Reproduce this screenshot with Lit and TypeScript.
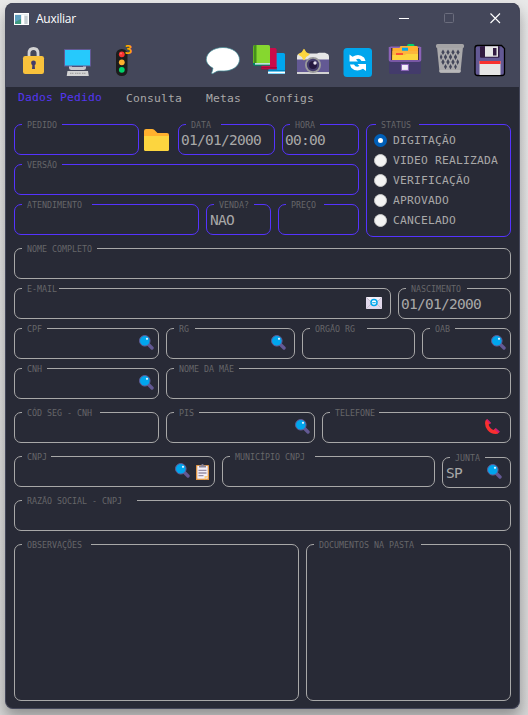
import { LitElement, html, svg, css, nothing, type TemplateResult } from "lit";
import { customElement, property } from "lit/decorators.js";

type Glyph = "search" | "mail" | "clipboard" | "phone";

const glyphs: Record<Glyph, TemplateResult> = {
  search: html`<svg width="15" height="15" viewBox="0 0 15 15">
    <path d="M9 9l4 4" stroke="#635994" stroke-width="3.4" stroke-linecap="round"/>
    <circle cx="5.8" cy="5.8" r="5.3" fill="#00a6ed" stroke="#635994" stroke-width="1"/>
    <circle cx="8" cy="3.8" r="1.1" fill="#e4f5ff"/></svg>`,
  mail: html`<svg width="16" height="12" viewBox="0 0 16 12">
    <rect width="16" height="12" fill="#e1d8ec"/><path d="M0 0l8 7 8-7z" fill="#f3eef8"/>
    <path d="M0 12l6-6M16 12l-6-6M0 0l6 6M16 0l-6 6" stroke="#b4acbc" stroke-width=".6"/>
    <circle cx="8" cy="5.6" r="3" fill="#fff" stroke="#00a6ed" stroke-width="1.5"/>
    <path d="M6.300 5.700h3.400" stroke="#00a6ed" stroke-width="1.100"/></svg>`,
  clipboard: html`<svg width="13" height="16" viewBox="0 0 13 16">
    <rect y="1" width="13" height="15" rx=".6" fill="#e19747"/><rect x="1.3" y="2" width="10.4" height="12.7" fill="#f3eef8"/>
    <path d="M3 1.6h2Q5.2 0 6.5 0T8 1.6h2v2H3z" fill="#8a8394"/>
    <path d="M2.5 6.4h8M2.5 9h8M2.5 11.7h5" stroke="#998ea4" stroke-width="1.3"/>
    <path d="M8.500 15.500v-3.500h4z" fill="#ffce7c"/></svg>`,
  phone: html`<svg width="15" height="15" viewBox="0 0 15 15">
    <path d="M.5 1.5L2 .2l3.6 3.6-2 2q1.4 4 5 5.2l1.7-1.8 4.2 3.6-1.8 2Q6 15.600 2.500 11T.5 1.500z" fill="#f92f2f"/>
    <path d="M1.300 1L2.300 0l3.900 3.900-1.200 1.200zM9.600 10.400l1.300-1.300 4 3.700-1.400 1.300z" fill="#ca1c78"/></svg>`,
};

/** Outlined box whose caption interrupts the top border. */
@customElement("caption-box")
class CaptionBox extends LitElement {
  @property() caption = "";
  @property() value = "";
  @property({ type: Number }) gap = 40;
  @property({ type: Number }) lead = 8;
  @property({ attribute: false }) icons: Glyph[] = [];

  static styles = css`
    :host { display: block; position: relative; box-sizing: border-box; flex: none;
      border: 1px solid var(--line, #a8a8a8); border-radius: 7px; color: #a8a8a8; }
    .caption { position: absolute; top: -5px; height: 9px; box-sizing: border-box; padding-left: 5px;
      background: #282a36; color: #666669; white-space: pre;
      font: 8.3px/10px "DejaVu Sans Mono", monospace; }
    .body { display: flex; align-items: center; height: 29px; padding: 0 var(--end, 4px) 0 var(--start, 2px); }
    .value { flex: 1; font: 14.5px/16px "DejaVu Sans Mono", monospace; letter-spacing: -0.73px; white-space: pre; padding-top: 1px; }
    .icons { display: flex; gap: 6px; align-items: center; padding-bottom: 2px; }
    .mail { padding-right: 4px; }
    .phone { padding-right: 6px; }
    .clipboard { padding: 2px 1px 0 0; }
    svg { display: block; fill: none; }
  `;

  render() {
    return html`<span class="caption" style="left:${this.lead - 1}px;width:${this.gap}px">${this.caption}</span>
      <slot><div class="body"><span class="value">${this.value}</span>
      ${this.icons.length ? html`<span class="icons">${this.icons.map(i => html`<span class=${i}>${glyphs[i]}</span>`)}</span>` : nothing}
      </div></slot>`;
  }
}

interface Box { w: number; c: string; g: number; v?: string; icons?: Glyph[]; kind?: string }

const orderRow: Box[] = [
  { w: 97, c: "DATA", g: 35, v: "01/01/2000" },
  { w: 77, c: "HORA", g: 30, v: "00:00" },
];
const serviceRow: Box[] = [
  { w: 185, c: "ATENDIMENTO", g: 70 },
  { w: 65, c: "VENDA?", g: 40, v: "NAO", kind: "choice" },
  { w: 81, c: "PREÇO", g: 38 },
];
const personRows: { h: number; after: number; items: Box[] }[] = [
  { h: 31, after: 9, items: [{ w: 497, c: "NOME COMPLETO", g: 75 }] },
  { h: 31, after: 9, items: [{ w: 377, c: "E-MAIL", g: 37, icons: ["mail"] }, { w: 113, c: "NASCIMENTO", g: 61, v: "01/01/2000" }] },
  { h: 31, after: 9, items: [
    { w: 145, c: "CPF", g: 25, icons: ["search"] }, { w: 129, c: "RG", g: 21, icons: ["search"], kind: "inset" },
    { w: 113, c: "ORGÃO RG", g: 57 }, { w: 89, c: "OAB", g: 25, icons: ["search"] }] },
  { h: 31, after: 13, items: [{ w: 145, c: "CNH", g: 25, icons: ["search"], kind: "raised" }, { w: 345, c: "NOME DA MÃE", g: 65 }] },
  { h: 31, after: 13, items: [
    { w: 145, c: "CÓD SEG - CNH", g: 78 }, { w: 149, c: "PIS", g: 25, icons: ["search"] },
    { w: 189, c: "TELEFONE", g: 49, icons: ["phone"] }] },
  { h: 31, after: 13, items: [
    { w: 201, c: "CNPJ", g: 29, icons: ["search", "clipboard"] }, { w: 213, c: "MUNICÍPIO CNPJ", g: 85 },
    { w: 69, c: "JUNTA", g: 35, v: "SP", icons: ["search"], kind: "choice inset drop" }] },
  { h: 31, after: 13, items: [{ w: 497, c: "RAZÃO SOCIAL - CNPJ", g: 115 }] },
  { h: 157, after: 0, items: [{ w: 285, c: "OBSERVAÇÕES", g: 69 }, { w: 205, c: "DOCUMENTOS NA PASTA", g: 107 }] },
];
const statuses = ["DIGITAÇÃO", "VIDEO REALIZADA", "VERIFICAÇÃO", "APROVADO", "CANCELADO"];

/** Toolbar slots: each drawing shares one coordinate space, cut into [left, width]. */
const tools: { x: number; w: number; art: TemplateResult }[] = [
  { x: 14, w: 40, art: svg`
    <path d="M29 57v-3.500q0-5 4.500-5t4.500 5V57" stroke="#d3d3d3" stroke-width="2.800"/>
    <rect x="23" y="56" width="21" height="18" rx="2.200" fill="#f9c23c"/>
    <circle cx="33.500" cy="63" r="2.400" fill="#433b6b"/><path d="M32.500 63h2l.5 6h-3z" fill="#433b6b"/>` },
  { x: 54, w: 50, art: svg`
    <path d="M69 65h17v3q0 2-2.500 2h-12q-2.500 0-2.500-2z" fill="#c9c7cc"/><path d="M72 65h11v2H72z" fill="#44475a"/>
    <rect x="64" y="49" width="27" height="17.500" rx=".5" fill="#635994"/><rect x="65" y="50" width="25" height="15.500" fill="#26c9fc"/>
    <path d="M67.500 71h20.500l.8 5H66.700z" fill="#d3d3d3"/><path d="M70 73.300h4M75 73.300h6M82 73.300h4" stroke="#9b9b9b" stroke-dasharray="1.300 .5"/>` },
  { x: 104, w: 40, art: svg`
    <rect x="116" y="49" width="11.500" height="27" rx="5.500" fill="#1c1c1c"/>
    <circle cx="121.800" cy="54.300" r="2.900" fill="#f8312f"/><circle cx="121.800" cy="62.300" r="2.900" fill="#ffb02e"/>
    <circle cx="121.800" cy="69.800" r="2.900" fill="#00d26a"/><circle cx="121" cy="53.500" r="1" fill="#ff6b6b"/>
    <text x="124.500" y="54" class="count">3</text>` },
  { x: 196, w: 50, art: svg`
    <path d="M223 47.500c9.500 0 16.500 5.500 16.500 12s-7 11.500-15.500 11.500c-3 0-5-.3-7 .3l-4 2.200c-1.600.7-1.600-.5-1-1.500l1-3.800c-3.800-2.200-6.700-5.200-6.700-8.700 0-6.500 7.200-12 16.700-12z" fill="#fff" stroke="#3e8993" stroke-width=".7"/>` },
  { x: 246, w: 45, art: svg`
    <path d="M270 53h13.500q1.500 0 1.500 1.500V74h-17z" fill="#00a6ed"/><path d="M268 71.500h17v2h-17z" fill="#fff"/><path d="M268 70.700h17" stroke="#006a9b" stroke-width=".7"/>
    <path d="M261 48h14q1.600 0 1.600 1.500V69h-15z" fill="#ca0b4a"/><path d="M261 67.500h16M261 69h16" stroke="#990838" stroke-width=".8"/>
    <path d="M255 45h13.500q1.500 0 1.500 1.500V65h-17V47q0-2 2-2z" fill="#86d72f"/><path d="M254.500 45h2v18h-3V46.500z" fill="#44911b"/>
    <path d="M253 63h17v2.700h-15q-2 0-2-1.500z" fill="#008463"/><path d="M255 63.900h15" stroke="#fff" stroke-width="1.100"/>` },
  { x: 291, w: 45, art: svg`
    <path d="M297 57q0-3.500 3-3.500h17l2-.7h6l2 1q2 .2 2 3.200v16H297z" fill="#e6e6e6"/>
    <path d="M297 59.500h32V72H297z" fill="#635994"/><path d="M297 72h32v2h-32z" fill="#d3d3d3"/>
    <circle cx="313" cy="65" r="8" fill="#9b9b9b"/><circle cx="313" cy="65" r="6.200" fill="#433b6b"/><circle cx="313" cy="65" r="4" fill="#25183f"/>
    <circle cx="315" cy="63" r="1.700" fill="#e6e0f0"/>
    <path d="M304 49.500l1.800 3 3.200 2-3.200 2-1.800 3.200-1.800-3.200-3.300-2 3.300-2z" fill="#fcd53f" stroke="#fcd53f" stroke-width="1.200" stroke-linejoin="round"/>` },
  { x: 336, w: 44, art: svg`
    <rect x="343.500" y="48" width="28.500" height="29" rx="3.500" fill="#00a6ed"/>
    <path d="M349.500 54.500l3 2.200q6.500-3.800 11.500.8.800 1 1.500 3.500h-4q-2-3.600-5.500-1.500l2 2h-8.500zM366 71l-3-2.200q-6.500 3.800-11.500-.8-.8-1-1.500-3.500h4q2 3.600 5.500 1.500l-2-2h8.500z" fill="#fff"/>` },
  { x: 380, w: 48, art: svg`
    <path d="M391 46.500h28.500q1.500 0 1.500 1.500v12h-32V48q0-1.500 2-1.500z" fill="#8c63b8"/><path d="M391 48h28v12h-28z" fill="#44303d"/>
    <path d="M407 46q0-2 2-2h4q1.500 0 1.500 2v2H407z" fill="#00d26a"/>
    <path d="M392.500 48h7l1-2h16q1.500 0 1.500 1.500V60h-26z" fill="#ffb02e"/><path d="M392.500 51h25.500v9h-25.500z" fill="#fcb53c"/>
    <path d="M392.500 55h12l2-1h11.500v6h-25.500z" fill="#fcd53f"/><rect x="402" y="47.700" width="6" height="3" fill="#00a6ed"/><path d="M396 54h7" stroke="#f8312f" stroke-width="1.700"/>
    <path d="M389 60h32v12q0 2-1.500 2h-29q-1.500 0-1.500-2z" fill="#433b6b"/><path d="M389.500 47v13q0 1 1.500 1h28q1.500 0 1.500-1v-13" stroke="#8c63b8" stroke-width="1.500"/>
    <rect x="401.400" y="64.400" width="7" height="6" fill="#f3eef8" stroke="#8c63b8"/>` },
  { x: 428, w: 41, art: svg`
    <path d="M437 47h26l-2.500 25q-.2 1-1.500 1h-18q-1.300 0-1.500-1z" fill="#aaa9ab"/>
    <g fill="#44475a"><path d="M443 49.500l1.700 2.700-1.700 2.700-1.700-2.700zM448 49.500l1.700 2.700-1.700 2.700-1.700-2.700zM453 49.500l1.700 2.700-1.700 2.700-1.700-2.700zM458 49.500l1.700 2.700-1.700 2.700-1.700-2.700z"/>
    <path d="M441 54l1.500 3-1.500 3-1.200-3zM445.500 54l1.700 3-1.700 3-1.700-3zM450.500 54l1.700 3-1.700 3-1.700-3zM455.500 54l1.700 3-1.700 3-1.700-3z"/>
    <path d="M443 59l1.700 3-1.700 3-1.700-3zM448 59l1.700 3-1.700 3-1.700-3zM453 59l1.700 3-1.700 3-1.700-3zM457.700 59l1.400 3-1.400 3-1.400-3z"/>
    <path d="M445.500 64l1.500 2.700-1.500 2.700-1.500-2.700zM450.500 64l1.500 2.700-1.500 2.700-1.500-2.700zM455.500 64l1.400 2.700-1.400 2.700-1.400-2.700z"/></g>
    <rect x="436" y="44" width="28" height="4" rx="1.500" fill="#a4a3a5"/><path d="M439.500 71h21" stroke="#b9b8ba" stroke-width="2"/>` },
  { x: 469, w: 42, art: svg`
    <path d="M477.500 45.500h24l3 3V73q0 2.500-2.500 2.500h-24.500q-2.500 0-2.500-2.500V48q0-2.500 2.500-2.500z" fill="#635994" stroke="#000" stroke-width="1.300"/>
    <rect x="480" y="46.200" width="19.500" height="11.500" rx="1" fill="#321b41"/><path d="M485 46.200h13v10.500h-13z" fill="#e6e6e6"/><rect x="493" y="48" width="3.500" height="7.500" fill="#321b41"/>
    <path d="M479.500 61h21v14h-21z" fill="#e6e6e6"/><path d="M479.500 61h21v3h-21z" fill="#f8312f"/>` },
];

@customElement("app-root")
class AppRoot extends LitElement {
  static styles = css`
    :host { display: block; box-sizing: border-box; width: 528px; height: 715px; padding: 3px 8px 6px 5px; overflow: hidden;
      background: linear-gradient(#e8e8e8, #dedede 60%, #d6d6d6); }
    .window { box-sizing: border-box; height: 706px; border-radius: 8px; overflow: hidden; background: #282a36;
      border: 1px solid #44475a; border-top: 0; box-shadow: 0 8px 14px rgba(0,0,0,.32); }
    .title { display: flex; align-items: center; height: 31px; padding: 0 8px; background: #44475a; color: #fff;
      font: 12px/16px "Open Sans", "Noto Sans", sans-serif; }
    .name { margin-left: 7px; flex: 1; letter-spacing: -.25px; }
    svg { display: block; fill: none; flex: none; }
    .tools { display: flex; height: 53px; padding-left: 8px; background: #44475a; }
    .spacer { width: 52px; }
    .count { font: bold 13px "DejaVu Sans Mono", monospace; fill: #ffa500; }
    .tabs { display: flex; height: 37px; box-sizing: border-box; padding: 4px 0 0 12px; color: #a8a8a8;
      font: 11.3px/15px "DejaVu Sans Mono", monospace; letter-spacing: .197px; gap: 24px; }
    .tab.active { color: #5436f2; margin-top: -1px; }
    .page { padding-left: 8px; }
    .top { display: flex; gap: 7px; --line: #5533ff; margin-bottom: 11px; }
    .left { display: flex; flex-direction: column; gap: 9px; width: 345px; }
    .row { display: flex; gap: 7px; }
    .order { gap: 7px; }
    .folder { width: 25px; margin: 5px 2px 0 -2px; }
    .drop { position: relative; top: 1px; }
    .choice { --start: 3px; }
    .inset { --end: 8px; }
    .status { width: 145px; height: 113px; }
    .options { display: flex; flex-direction: column; padding: 5px 0 0 7px; }
    .option { display: flex; align-items: center; height: 20px; gap: 6px; font: 11.3px/15px "DejaVu Sans Mono", monospace; letter-spacing: .197px; white-space: nowrap; }
    .dot { box-sizing: border-box; width: 13px; height: 13px; border-radius: 50%; background: #f3f3f3; border: 1px solid #c8c8c8; }
    .dot.on { background: #fff; border: 4px solid #005fb8; }
  `;

  private box(b: Box, h = 31) {
    return html`<caption-box class=${b.kind ?? ""} style="width:${b.w}px;height:${h}px" .caption=${b.c}
      .gap=${b.g} .value=${b.v ?? ""} .icons=${b.icons ?? []}></caption-box>`;
  }

  render() {
    return html`<div class="window">
      <div class="title">
        <svg width="15" height="12" viewBox="0 0 15 12"><rect x=".5" y=".5" width="14" height="11" fill="#e9eef0" stroke="#fff"/>
          <path d="M1 2h6v9H1z" fill="#3f9a80"/><path d="M1 2h6v4L1 9z" fill="#5f9fc0"/><path d="M8 2h2v9H8z" fill="#fff"/><path d="M10.500 3h3v8h-3z" fill="#c5ced2"/></svg>
        <span class="name">Auxiliar</span>
        <svg width="121" height="20" viewBox="391 9 121 20"><path d="M400 18.500h10" stroke="#fff"/>
          <rect x="445.500" y="13.500" width="9" height="9" rx="1" stroke="#6b6d7d"/>
          <path d="M491.500 13.500l9.500 9.500M501 13.500l-9.500 9.500" stroke="#fff" stroke-width="1.100"/></svg>
      </div>
      <div class="tools">
        ${tools.map(t => html`${t.x === 196 ? html`<span class="spacer"></span>` : nothing}
          <svg width=${t.w} height="53" viewBox="${t.x} 34 ${t.w} 53">${t.art}</svg>`)}
      </div>
      <div class="tabs"><span class="tab active">Dados Pedido</span><span class="tab">Consulta</span><span class="tab">Metas</span><span class="tab">Configs</span></div>
      <div class="page">
        <div class="top">
          <div class="left">
            <div class="row order">
              ${this.box({ w: 125, c: "PEDIDO", g: 40 })}
              <svg class="folder" width="25" height="22" viewBox="0 0 25 22"><path d="M0 2q0-2 2-2h6q1.500 0 2.500 1l3 3H23q2 0 2 2v4H0z" fill="#ffb02e"/><path d="M0 7h25v13.500q0 1.500-1.500 1.500h-22Q0 22 0 20.500z" fill="#fcd53f"/></svg>
              ${orderRow.map(b => this.box(b))}
            </div>
            ${this.box({ w: 345, c: "VERSÃO", g: 40 })}
            <div class="row">${serviceRow.map(b => this.box(b))}</div>
          </div>
          <caption-box class="status" .caption=${"STATUS"} .gap=${43} .lead=${10}>
            <div class="options">${statuses.map((s, i) => html`<div class="option"><span class="dot ${i === 0 ? "on" : ""}"></span>${s}</div>`)}</div>
          </caption-box>
        </div>
        ${personRows.map(r => html`<div class="row" style="margin-bottom:${r.after}px">${r.items.map(b => this.box(b, r.h))}</div>`)}
      </div>
    </div>`;
  }
}
